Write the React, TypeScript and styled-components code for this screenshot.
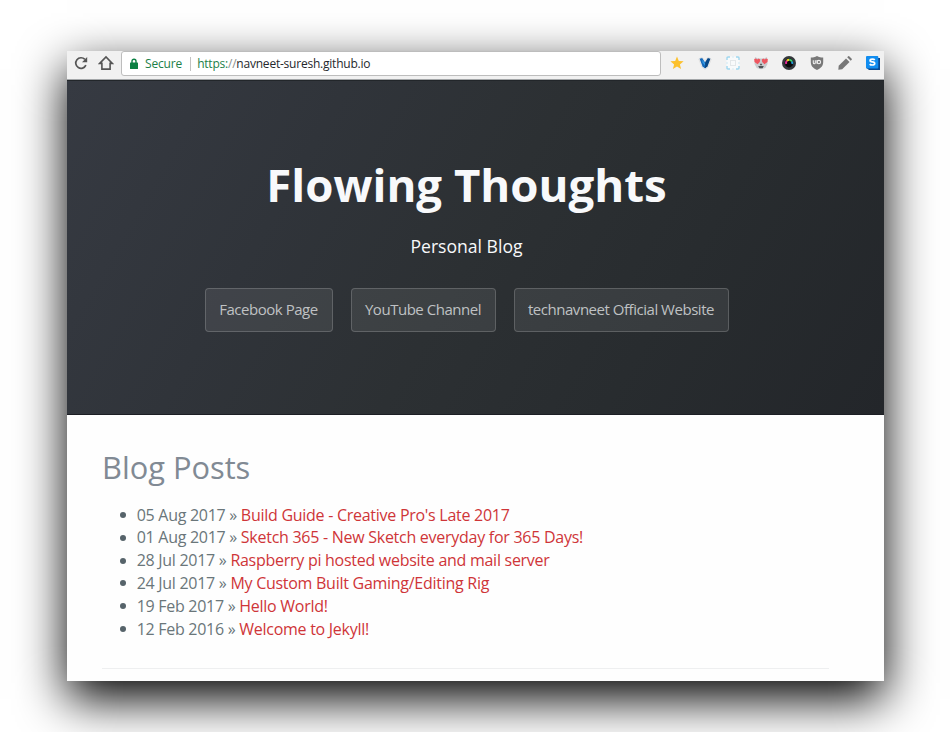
import React from "react";
import styled, { createGlobalStyle } from "styled-components";

const GlobalStyle = createGlobalStyle`
  * { box-sizing: border-box; }
  body { margin: 0; background: #fff; overflow: hidden; }
`;

const Stage = styled.div`
  width: 950px;
  height: 732px;
  padding: 51px 66px 51px 67px;
  overflow: hidden;
  background: #fff;
  font-family: "Open Sans", sans-serif;
`;

const BrowserWindow = styled.div`
  display: flex;
  flex-direction: column;
  height: 630px;
  background: #fefefe;
  box-shadow: 0 18px 46px #000;
`;

const Toolbar = styled.div`
  display: flex;
  align-items: flex-start;
  flex: none;
  height: 29px;
  padding: 0 3px 0 6px;
  background: #f1f1f1;
  border-bottom: 1px solid #a3a6a8;
`;

const NavButtons = styled.div`
  display: flex;
  gap: 9px;
  width: 48px;
  padding-top: 4px;
`;

const AddressBar = styled.div`
  display: flex;
  align-items: center;
  width: 540px;
  height: 25px;
  padding: 0 8px;
  background: #fff;
  border: 1px solid #bdbdbd;
  border-radius: 3px;
  font-size: 12px;
  line-height: 22px;
  white-space: pre;
`;

const Secure = styled.span`
  margin-left: 7px;
  color: #1c8048;
  letter-spacing: -0.15px;
`;

const Divider = styled.span`
  width: 1px;
  height: 14px;
  margin: 0 6px 0 8px;
  background: #c2c2c2;
`;

const Url = styled.span`
  color: #25282c;
  letter-spacing: -0.22px;
`;

const UrlPart = styled.span<{ $tone: string }>`
  color: ${(p) => p.$tone};
`;

const Extensions = styled.div`
  display: flex;
  gap: 12px;
  margin-left: 8px;
  padding-top: 4px;
`;

const Hero = styled.header`
  display: flex;
  flex-direction: column;
  align-items: center;
  flex: none;
  height: 335px;
  padding: 70px 18px 0 0;
  background: linear-gradient(120deg, #363a42 0%, #30343a 28%, #2c3033 50%, #282c2f 72%, #23262a 100%);
  border-top: 1px solid #22262a;
  border-bottom: 1px solid #1c1e24;
  color: #f8f9fb;
`;

const Title = styled.h1`
  margin: 0;
  font-size: 45.6px;
  line-height: 66px;
  font-weight: 700;
`;

const Tagline = styled.p`
  margin: 17px 0 0;
  font-size: 17.6px;
  line-height: 24px;
`;

const Buttons = styled.div`
  display: flex;
  gap: 18px;
  margin-top: 30px;
`;

const HeroButton = styled.a<{ $width: number }>`
  width: ${(p) => p.$width}px;
  height: 44px;
  border: 1px solid rgba(255, 255, 255, 0.18);
  border-radius: 4px;
  background: rgba(255, 255, 255, 0.08);
  color: #bfc1c3;
  font-size: 15px;
  line-height: 41px;
  letter-spacing: -0.47px;
  text-align: center;
  white-space: nowrap;
`;

const Content = styled.main`
  display: flex;
  flex-direction: column;
  flex: 1;
  padding: 31px 55px 0 35px;
`;

const Heading = styled.h2`
  margin: 0;
  color: #818a94;
  font-size: 30.8px;
  font-weight: 400;
  line-height: 42px;
`;

const Posts = styled.ul`
  margin: 15.6px 0 0;
  padding: 0;
  list-style: none;
`;

const Post = styled.li`
  display: flex;
  align-items: center;
  height: 22.8px;
  padding-left: 18px;
  color: #6a767a;
  font-size: 16px;
  line-height: 22.8px;
  white-space: pre;

  &::before {
    content: "";
    width: 6px;
    height: 6px;
    margin-right: 10.7px;
    border-radius: 50%;
    background: #56636a;
  }
`;

const PostDate = styled.span`
  letter-spacing: -0.28px;
`;

const PostLink = styled.a`
  color: #cf3538;
  letter-spacing: -0.27px;
`;

const Rule = styled.hr`
  width: 100%;
  height: 1px;
  margin: 27.4px 0 0;
  border: 0;
  background: #eeeff0;
`;

const Icon = styled.svg`
  display: block;
  flex: none;
`;

const posts: [string, string][] = [
  ["05 Aug 2017", "Build Guide - Creative Pro's Late 2017"],
  ["01 Aug 2017", "Sketch 365 - New Sketch everyday for 365 Days!"],
  ["28 Jul 2017", "Raspberry pi hosted website and mail server"],
  ["24 Jul 2017", "My Custom Built Gaming/Editing Rig"],
  ["19 Feb 2017", "Hello World!"],
  ["12 Feb 2016", "Welcome to Jekyll!"],
];

const links: [string, number][] = [
  ["Facebook Page", 128],
  ["YouTube Channel", 145],
  ["technavneet Official Website", 215],
];

const ReloadIcon = () => (
  <Icon width="16" height="16" viewBox="0 0 16 16">
    <path d="M12.9 10.200A5.300 5.300 0 1 1 11.900 4.400" fill="none" stroke="#555" strokeWidth="1.700" />
    <path d="M14.200 2v5.200H9z" fill="#555" />
  </Icon>
);

const HomeIcon = () => (
  <Icon width="16" height="16" viewBox="0 0 16 16">
    <path d="M1.700 8.400 8 2l6.300 6.400h-2.200v5.700H3.900V8.400z" fill="none" stroke="#555" strokeWidth="1.600" />
  </Icon>
);

const LockIcon = () => (
  <Icon width="8" height="12" viewBox="0 0 8 12">
    <path d="M2 5V3.200a2 2 0 0 1 4 0V5" fill="none" stroke="#0b8043" strokeWidth="1.400" />
    <rect y="4.600" width="8" height="6.400" rx="0.600" fill="#0b8043" />
  </Icon>
);

const StarIcon = () => (
  <Icon width="16" height="16" viewBox="0 0 16 16">
    <path d="m8 1.500 1.800 4.500 4.800.3-3.700 3.100 1.200 4.700L8 11.500l-4.100 2.600 1.200-4.700-3.700-3.100L6.200 6z" fill="#fcc12d" />
  </Icon>
);

const ArrowheadIcon = () => (
  <Icon width="16" height="16" viewBox="0 0 16 16">
    <path d="m1.800 4 3.200-1.800 3 3.600 3-3.600L14.200 4l-3 8L8 14.500 4.800 12z" fill="#fff" stroke="#e0e0e0" />
    <path d="m2.600 3.800 2.600-.9L8 7.200V13.600l-2.500-2.200z" fill="#1769b8" />
    <path d="m13.400 3.800-2.600-.9L8 7.200V13.600l2.500-2.200z" fill="#084887" />
    <path d="m5.300 4.500 2.700 4 .2 2.200-2.600-3z" fill="#339bea" />
  </Icon>
);

const CaptureIcon = () => (
  <Icon width="16" height="16" viewBox="0 0 16 16">
    <rect x="1.500" y="1.500" width="13" height="13" rx="2" fill="#f8fafb" />
    <path d="M2 5V3q0-1 1-1h2M11 2h2q1 0 1 1v2M14 11v2q0 1-1 1h-2M5 14H3q-1 0-1-1v-2" fill="none" stroke="#9fd6ee" strokeWidth="1.400" />
    <path d="M7 2h2M14 7v2M9 14H7M2 9V7" stroke="#d5ebf4" strokeWidth="1.200" />
    <rect x="5.500" y="5.500" width="5" height="5" fill="none" stroke="#e3e7e9" />
  </Icon>
);

const CatIcon = () => (
  <Icon width="16" height="16" viewBox="0 0 16 16">
    <path d="m2 2 3 1.500h6L14 2l.5 7-2.200 4L8 14.300 3.700 13 1.500 9z" fill="#c9cccf" />
    <path d="M1.200 4 3 3.400l1.200 1 1.500-1 1.500 1.200-.4 2.500-2.200 2.200-3.100-2.300zM14.800 4 13 3.400l-1.200 1-1.500-1-1.500 1.200.4 2.500 2.200 2.200 3.100-2.300z" fill="#ee5660" />
    <path d="M5.200 11h5.600l-1.200 2.300H6.400z" fill="#4e5255" />
    <path d="m6.800 9.300 1.200-.7 1.200.7L8 10.700z" fill="#555" />
  </Icon>
);

const LensIcon = () => (
  <Icon width="16" height="16" viewBox="0 0 16 16">
    <circle cx="8" cy="8" r="7" fill="#34383c" />
    <circle cx="8" cy="8" r="4.400" fill="#090a0b" />
    <g fill="none" strokeWidth="2">
      <path d="M5.200 9A3.200 3.200 0 0 1 6 5.600" stroke="#e52b9b" />
      <path d="M6 5.700a3.200 3.200 0 0 1 2.300-.9" stroke="#f4d21e" />
      <path d="M8.200 4.800a3.300 3.300 0 0 1 2.800 1.900" stroke="#3ed26c" />
      <path d="M11 6.600a3.500 3.500 0 0 1 .1 2.300" stroke="#249bda" />
    </g>
  </Icon>
);

const ShieldIcon = () => (
  <Icon width="16" height="16" viewBox="0 0 16 16">
    <path d="M8 1c2 1.200 4 1.600 6.200 1.600V7c0 3.800-2 6-6.200 8.100C3.800 13 1.800 10.800 1.800 7V2.600C4 2.600 6 2.200 8 1z" fill="#787878" />
    <path d="M4.300 5.300v2.500q0 1 1 1t1-1V5.300M8 5v3.800" fill="none" stroke="#eee" strokeWidth="1.100" />
    <circle cx="9.900" cy="7.100" r="1.700" fill="none" stroke="#eee" strokeWidth="1.100" />
  </Icon>
);

const PencilIcon = () => (
  <Icon width="16" height="16" viewBox="0 0 16 16">
    <path d="m1.300 14.700.4-3.900 7.300-7.300 3.500 3.500-7.300 7.300z" fill="#777" />
    <path d="m10.200 2.300 1-1q.5-.5 1 0l2.500 2.500q.5.500 0 1l-1 1z" fill="#777" />
  </Icon>
);

const SquareSIcon = () => (
  <Icon width="16" height="16" viewBox="0 0 16 16">
    <path d="M3 3h12v12H4l-2.500-2z" fill="#0a4990" />
    <rect x="1" y="1" width="12.300" height="12.500" rx="1" fill="#118df0" />
    <path d="M9.800 4.900Q9 4.100 7.300 4.100q-2.200 0-2.200 1.400 0 1.200 2.200 1.400 2.400.2 2.400 1.600 0 1.500-2.400 1.500-1.800 0-2.600-.9" fill="none" stroke="#fff" strokeWidth="1.700" />
  </Icon>
);

export default function App() {
  return (
    <>
      <GlobalStyle />
      <Stage>
        <BrowserWindow>
          <Toolbar>
            <NavButtons>
              <ReloadIcon />
              <HomeIcon />
            </NavButtons>
            <AddressBar>
              <LockIcon />
              <Secure>Secure</Secure>
              <Divider />
              <Url>
                <UrlPart $tone="#1c8048">https:</UrlPart>
                <UrlPart $tone="#8b8f8d">//</UrlPart>
                navneet-suresh.github.io
              </Url>
            </AddressBar>
            <Extensions>
              <StarIcon />
              <ArrowheadIcon />
              <CaptureIcon />
              <CatIcon />
              <LensIcon />
              <ShieldIcon />
              <PencilIcon />
              <SquareSIcon />
            </Extensions>
          </Toolbar>
          <Hero>
            <Title>Flowing Thoughts</Title>
            <Tagline>Personal Blog</Tagline>
            <Buttons>
              {links.map(([label, width]) => (
                <HeroButton key={label} $width={width}>{label}</HeroButton>
              ))}
            </Buttons>
          </Hero>
          <Content>
            <Heading>Blog Posts</Heading>
            <Posts>
              {posts.map(([date, title]) => (
                <Post key={title}>
                  <PostDate>{date} » </PostDate>
                  <PostLink>{title}</PostLink>
                </Post>
              ))}
            </Posts>
            <Rule />
          </Content>
        </BrowserWindow>
      </Stage>
    </>
  );
}
